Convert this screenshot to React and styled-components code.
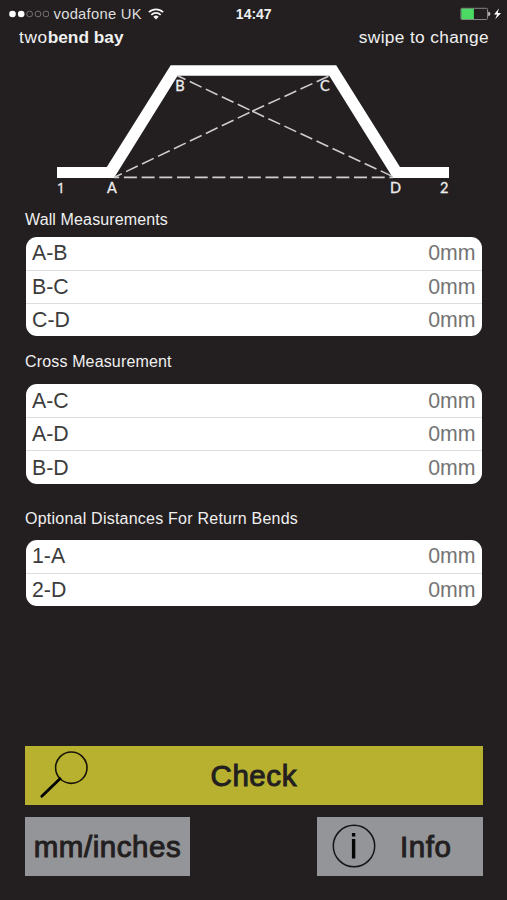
import React from 'react'
import styled, { createGlobalStyle } from 'styled-components'

const wall = ['A-B', 'B-C', 'C-D']
const cross = ['A-C', 'A-D', 'B-D']
const returns = ['1-A', '2-D']

function StatusBar() {
  return (
    <Status>
      <Carrier>
        <svg width="40" height="8" viewBox="0 0 40 8">
          <circle cx="3.5" cy="4" r="3.3" fill="#fff" />
          <circle cx="12.2" cy="4" r="3.3" fill="#fff" />
          <g fill="none" stroke="#7d7a7c" strokeWidth="0.9">
            <circle cx="20.6" cy="4" r="2.9" />
            <circle cx="29" cy="4" r="2.9" />
            <circle cx="37" cy="4" r="2.9" />
          </g>
        </svg>
        <CarrierName>vodafone UK</CarrierName>
        <svg width="16" height="12" viewBox="0 0 16 12">
          <g fill="none" stroke="#f4f4f4" strokeWidth="1.7">
            <path d="M0.9 4.2a10.2 10.2 0 0 1 14.2 0" />
            <path d="M3.3 6.9a6.7 6.7 0 0 1 9.4 0" />
          </g>
          <path d="M8 11.4L5.3 8.8a3.9 3.9 0 0 1 5.4 0z" fill="#f4f4f4" />
        </svg>
      </Carrier>
      <Clock>14:47</Clock>
      <Battery>
        <svg width="42" height="14" viewBox="0 0 42 14">
          <rect x="0.9" y="1.3" width="26.6" height="11.2" rx="1" fill="none" stroke="#858284" />
          <rect x="1.3" y="1.7" width="12.6" height="10.4" fill="#4cd964" />
          <path d="M28.6 5a2 2 0 0 1 0 3.8z" fill="#d8d8d8" stroke="#d8d8d8" strokeWidth="0.6" />
          <path d="M38.9 1.4L34 7.5h3.1l-1.9 4.8 5.9-6.3h-3.4z" fill="#fff" />
        </svg>
      </Battery>
    </Status>
  )
}

function BayDiagram() {
  return (
    <Diagram viewBox="0 0 507 150">
      <path
        d="M57 112H106.8L170.7 10.3H336.2L400 112H449V123H393L329.3 20.8H177.6L114 123H57z"
        fill="#fff"
      />
      <g fill="none" stroke="#cfcdce" strokeWidth="1.6" strokeDasharray="13 4.7">
        <path d="M114 122.4H393" strokeDashoffset="7.8" />
        <path d="M252.3 56.2L329 21" />
        <path d="M252.3 56.2L393 121.6" />
        <path d="M252.3 56.2L177.6 20.8" strokeDashoffset="14.6" />
        <path d="M252.3 56.2L114 122.4" strokeDashoffset="14.6" />
      </g>
      <Label x="61" y="137.5" $plain>1</Label>
      <Label x="111.8" y="137.5">A</Label>
      <Label x="180" y="36">B</Label>
      <Label x="324.8" y="36">C</Label>
      <Label x="395.6" y="137.5">D</Label>
      <Label x="444.2" y="137.5">2</Label>
    </Diagram>
  )
}

function Measurements({ title, rows, gap, top, spacing }) {
  return (
    <Section $top={top}>
      <SectionTitle $gap={gap} $spacing={spacing}>{title}</SectionTitle>
      <List>
        {rows.map((name) => (
          <Row key={name}>
            <span>{name}</span>
            <Value>0mm</Value>
          </Row>
        ))}
      </List>
    </Section>
  )
}

function App() {
  return (
    <Screen>
      <GlobalStyle />
      <StatusBar />
      <Header>
        <Title>
          two<b>bend bay</b>
        </Title>
        <Hint>swipe to change</Hint>
      </Header>
      <BayDiagram />
      <Measurements title="Wall Measurements" rows={wall} top={5} gap={6.6} spacing={0.13} />
      <Measurements title="Cross Measurement" rows={cross} top={15.8} gap={12} spacing={0.15} />
      <Measurements title="Optional Distances For Return Bends" rows={returns} top={25.5} gap={10.6} spacing={0.23} />
      <Actions>
        <CheckButton>
          <CheckIcon width="50" height="50" viewBox="0 0 50 50">
            <circle cx="32.3" cy="17.7" r="15.7" fill="none" stroke="#171407" strokeWidth="1.6" />
            <path d="M21 28.8L2.8 46.3" stroke="#000" strokeWidth="2.8" strokeLinecap="round" />
          </CheckIcon>
          <Caption>Check</Caption>
        </CheckButton>
        <ButtonRow>
          <UnitsButton>
            <Caption>mm/inches</Caption>
          </UnitsButton>
          <InfoButton>
            <svg width="44" height="44" viewBox="0 0 44 44">
              <circle cx="22" cy="22" r="20.7" fill="none" stroke="#151517" strokeWidth="1.5" />
              <path d="M19.9 8.9h3.4v3.5h-3.4zM19.9 15h3.4v19.5h-3.4z" fill="#050505" />
            </svg>
            <Caption>Info</Caption>
          </InfoButton>
        </ButtonRow>
      </Actions>
    </Screen>
  )
}

const GlobalStyle = createGlobalStyle`
  body {
    margin: 0;
    background-color: #231f20;
  }
`

const Screen = styled.main`
  display: flex;
  flex-direction: column;
  box-sizing: border-box;
  width: 507px;
  height: 900px;
  overflow: hidden;
  background-color: #231f20;
  color: #f0f0f0;
  font-family: 'Liberation Sans', Arial, sans-serif;
`

const Status = styled.div`
  display: grid;
  grid-template-columns: 1fr auto 1fr;
  align-items: center;
  height: 27px;
  padding: 0 5px 0 8.5px;
  flex-shrink: 0;
`

const Carrier = styled.div`
  display: flex;
  align-items: center;
`

const CarrierName = styled.span`
  margin: 1px 6px 0 5px;
  font-size: 14.8px;
  letter-spacing: 0.25px;
  color: #dedede;
`

const Clock = styled.span`
  margin: 1px 3px 0 0;
  font-size: 14px;
  font-weight: bold;
`

const Battery = styled.div`
  display: flex;
  justify-content: flex-end;
`

const Header = styled.header`
  display: flex;
  justify-content: space-between;
  height: 28px;
  padding: 0 18px 0 19px;
  font-size: 17.3px;
  line-height: 20px;
  flex-shrink: 0;
`

const Title = styled.span`
  letter-spacing: 0.6px;
  b {
    letter-spacing: 0;
  }
`

const Hint = styled.span`
  letter-spacing: 0.35px;
`

const Diagram = styled.svg`
  display: block;
  width: 507px;
  height: 150px;
  flex-shrink: 0;
`

const Label = styled.text`
  font-family: ${(props) => (props.$plain ? "'Open Sans'" : 'Lato')}, sans-serif;
  font-size: 14.5px;
  font-weight: 400;
  text-anchor: middle;
  fill: #ededed;
  stroke: #ededed;
  stroke-width: 0.3px;
`

const Section = styled.section`
  padding: 0 25px 0 26px;
  margin-top: ${(props) => props.$top}px;
`

const SectionTitle = styled.h2`
  margin: 0 0 ${(props) => props.$gap}px -1px;
  font-size: 16px;
  font-weight: normal;
  line-height: 20px;
  letter-spacing: ${(props) => props.$spacing}px;
`

const List = styled.div`
  border-radius: 11px;
  overflow: hidden;
  background-color: #fff;
`

const Row = styled.div`
  display: flex;
  justify-content: space-between;
  align-items: center;
  box-sizing: border-box;
  height: 33.2px;
  padding: 1.4px 6.5px 0 6px;
  font-size: 21.3px;
  color: #3c3c3c;
  & + & {
    border-top: 1px solid #dedede;
  }
`

const Value = styled.span`
  color: #747474;
`

const Actions = styled.div`
  display: flex;
  flex-direction: column;
  gap: 12px;
  margin-top: auto;
  padding: 0 24.5px 24.5px 25px;
`

const Button = styled.button`
  display: flex;
  align-items: center;
  justify-content: center;
  height: 59px;
  padding: 0;
  border: none;
  font-family: inherit;
  font-size: 29.5px;
  letter-spacing: 0.55px;
  color: #231f20;
  -webkit-text-stroke: 1px #231f20;
  background-color: #939598;
`

const Caption = styled.span`
  padding-top: 2px;
`

const CheckButton = styled(Button)`
  display: grid;
  grid-template-columns: 1fr auto 1fr;
  background-color: #b8b12f;
  &::after {
    content: '';
  }
`

const CheckIcon = styled.svg`
  margin-left: 14px;
`

const ButtonRow = styled.div`
  display: flex;
  justify-content: space-between;
`

const UnitsButton = styled(Button)`
  width: 165px;
`

const InfoButton = styled(Button)`
  justify-content: flex-start;
  gap: 24px;
  width: 165.5px;
  padding-left: 15px;
`

export default App
